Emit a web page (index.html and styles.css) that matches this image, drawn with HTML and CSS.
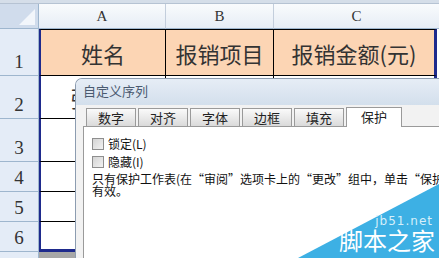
FILE: index.html
```html
<!DOCTYPE html>
<html lang="zh-CN">
<head>
    <meta charset="UTF-8">
    <meta name="viewport" content="width=device-width, initial-scale=1.0">
    <title>自定义序列</title>
    <link rel="stylesheet" href="styles.css">
</head>
<body>
    <div class="sheet">
        <div class="topbar"></div>
        <div class="row head">
            <div class="rh corner"><span class="tri"></span></div>
            <div class="ch col-a">A</div>
            <div class="ch col-b">B</div>
            <div class="ch col-c">C</div>
        </div>
        <div class="row r1">
            <div class="rh">1</div>
            <div class="cell col-a title">姓名</div>
            <div class="cell col-b title">报销项目</div>
            <div class="cell col-c title last">报销金额(元)</div>
        </div>
        <div class="row r2">
            <div class="rh">2</div>
            <div class="cell col-a data">张三丰</div>
            <div class="cell col-b"></div>
            <div class="cell col-c last"></div>
        </div>
        <div class="row r3">
            <div class="rh">3</div>
            <div class="cell col-a"></div>
            <div class="cell col-b"></div>
            <div class="cell col-c last"></div>
        </div>
        <div class="row small">
            <div class="rh">4</div>
            <div class="cell col-a"></div>
            <div class="cell col-b"></div>
            <div class="cell col-c last"></div>
        </div>
        <div class="row small">
            <div class="rh">5</div>
            <div class="cell col-a"></div>
            <div class="cell col-b"></div>
            <div class="cell col-c last"></div>
        </div>
        <div class="row small r6">
            <div class="rh">6</div>
            <div class="cell col-a"></div>
            <div class="cell col-b"></div>
            <div class="cell col-c last"></div>
        </div>
        <div class="row rest">
            <div class="rh"></div>
            <div class="gray"></div>
        </div>
    </div>

    <div class="dialog">
        <div class="dlg-title">自定义序列</div>
        <div class="dlg-body">
            <div class="tabs">
                <div class="tab">数字</div>
                <div class="tab">对齐</div>
                <div class="tab">字体</div>
                <div class="tab">边框</div>
                <div class="tab">填充</div>
                <div class="tab active">保护</div>
            </div>
            <div class="panel">
                <label class="check"><span class="box"></span>锁定(L)</label>
                <label class="check"><span class="box"></span>隐藏(I)</label>
                <p class="note">只有保护工作表(在“审阅”选项卡上的“更改”组中，单击“保护<br>有效。</p>
            </div>
        </div>
    </div>

    <div class="mark">
        <svg width="141" height="74" viewBox="0 0 141 74">
            <polygon points="0,74 141,0 141,74" fill="#3db0e4"/>
        </svg>
        <div class="mark-url">jb51.net</div>
        <div class="mark-name">脚本之家</div>
    </div>
</body>
</html>
```

FILE: styles.css
```css
body {
    margin: 0;
    width: 439px;
    height: 258px;
    overflow: hidden;
    position: relative;
    background: #fff;
    font-family: "Noto Sans CJK SC", sans-serif;
}
.sheet {
    display: flex;
    flex-direction: column;
    height: 258px;
}
.topbar {
    height: 3px;
    background: #d5dee9;
    border-bottom: 1px solid #b6c3d3;
}
.row {
    display: flex;
    box-sizing: border-box;
}
.rh {
    width: 39px;
    flex: none;
    box-sizing: border-box;
    background: #e4ecf7;
    border-right: 1px solid #9eb6ce;
    border-bottom: 1px solid #9eb6ce;
    display: flex;
    align-items: flex-end;
    justify-content: center;
    font-family: "Liberation Serif", serif;
    font-size: 19px;
    color: #333;
    line-height: 1;
    padding-bottom: 4px;
}
.head {
    height: 25px;
}
.corner {
    background: #d0dcec;
    border-right: 1px solid #9eb6ce;
    position: relative;
}
.tri {
    position: absolute;
    right: 3px;
    bottom: 3px;
    width: 0;
    height: 0;
    border-left: 16px solid transparent;
    border-bottom: 16px solid #f2f6fb;
}
.ch {
    box-sizing: border-box;
    background: linear-gradient(#f9fbfd, #e6edf5);
    border-right: 1px solid #c3cedc;
    border-bottom: 1px solid #9eb6ce;
    display: flex;
    align-items: center;
    justify-content: center;
    font-family: "Liberation Serif", serif;
    font-size: 15px;
    color: #333;
}
.col-a { width: 127px; }
.col-b { width: 108px; }
.col-c { width: 163px; }
.ch.col-c { flex: 1; border-right: none; }
.cell {
    box-sizing: border-box;
    border-right: 1px solid #000;
    border-bottom: 1px solid #000;
    display: flex;
    align-items: center;
    justify-content: center;
    overflow: hidden;
    white-space: nowrap;
}
.cell.col-a {
    border-left: 2px solid #1e2a8c;
}
.cell.last {
    border-right: 3px solid #1e2a8c;
}
.r1 { height: 47px; }
.r1 .cell { border-top: 1px solid #000; }
.r2, .r3 { height: 43px; }
.small { height: 30px; }
.r6 .cell { border-bottom: 3px solid #1e2a8c; }
.title {
    background: #fcd5b4;
    font-size: 22px;
    color: #333;
}
.data {
    font-size: 22px;
    color: #333;
}
.rest {
    flex: 1;
}
.rest .rh {
    border-bottom: none;
}
.gray {
    flex: 1;
    background: #a7a7a7;
}

.dialog {
    position: absolute;
    left: 75px;
    top: 78px;
    width: 364px;
    height: 180px;
    box-sizing: border-box;
    border: 1px solid #8c9cb0;
    border-right: none;
    border-bottom: none;
    border-radius: 7px 0 0 0;
    background: #eef2f7;
    overflow: hidden;
}
.dlg-title {
    height: 26px;
    background: linear-gradient(#e6edf6, #d3dfec);
    font-size: 13px;
    color: #4a5a70;
    line-height: 24px;
    padding-left: 7px;
}
.dlg-body {
    background: #f2f2f2;
    padding: 1px 0 0 7px;
    height: 100%;
}
.tabs {
    display: flex;
    align-items: flex-end;
    height: 20px;
    padding-left: 3px;
}
.tab {
    width: 50px;
    height: 18px;
    margin-right: 2px;
    box-sizing: border-box;
    border: 1px solid #9a9a9a;
    border-bottom: none;
    background: linear-gradient(#fafafa, #dadada);
    font-size: 13px;
    line-height: 17px;
    text-align: center;
    color: #222;
}
.tab.active {
    width: 56px;
    height: 20px;
    background: #fff;
    position: relative;
    top: 1px;
}
.panel {
    background: #fff;
    border: 1px solid #9a9a9a;
    border-right: none;
    height: 140px;
    padding: 8px 0 0 8px;
    font-size: 12px;
    color: #111;
}
.check {
    display: flex;
    align-items: center;
    height: 18px;
    line-height: 1;
}
.box {
    width: 10px;
    height: 10px;
    border: 1px solid #8e8e8e;
    background: linear-gradient(135deg, #d4d4d4, #f2f2f2);
    margin-right: 4px;
}
.note {
    margin: 2px 0 0;
    line-height: 12px;
    white-space: nowrap;
}

.mark {
    position: absolute;
    right: 0;
    bottom: 0;
    width: 141px;
    height: 74px;
}
.mark svg {
    display: block;
}
.mark-url {
    position: absolute;
    right: 6px;
    top: 30px;
    font-family: "DejaVu Sans", sans-serif;
    font-size: 12px;
    color: #d6effa;
    letter-spacing: 1px;
}
.mark-name {
    position: absolute;
    right: 4px;
    top: 42px;
    font-size: 24px;
    line-height: 28px;
    color: #fff;
}
```
